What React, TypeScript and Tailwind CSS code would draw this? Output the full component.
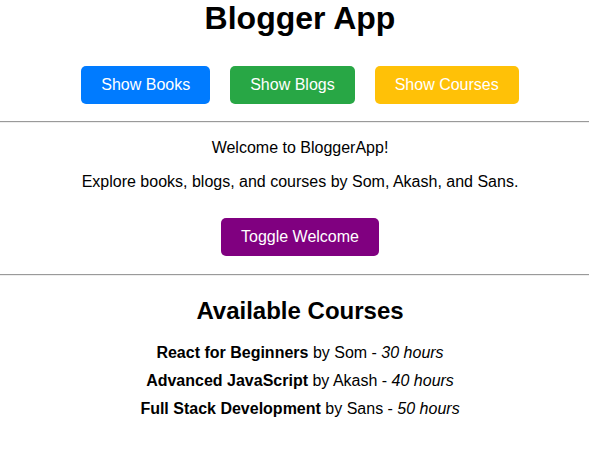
import React from "react";

export default function App() {
  const btn = "px-[20px] py-[10px] text-[16px] leading-[18px] text-white rounded-[5px]";
  const hr = "border-0 border-t border-b border-t-[#9a9a9a] border-b-[#eeeeee] h-[2px]";
  return (
    <div className="w-[589px] h-[457px] overflow-hidden bg-white">
      <div className="w-[600px] text-black text-center" style={{ fontFamily: '"Liberation Sans", Arial, sans-serif' }}>
        <h1 className="mt-0 text-[32px] leading-[37px] font-bold">Blogger App</h1>
        <div className="mt-[29px] flex justify-center gap-[20px]">
          <button className={`${btn} bg-[#007bff]`}>Show Books</button>
          <button className={`${btn} bg-[#28a745]`}>Show Blogs</button>
          <button className={`${btn} bg-[#ffc107]`}>Show Courses</button>
        </div>
        <hr className={`mt-[17px] ${hr}`} />
        <p className="mt-[16px] text-[16px] leading-[18px]">Welcome to BloggerApp!</p>
        <p className="mt-[16px] text-[16px] leading-[18px]">Explore books, blogs, and courses by Som, Akash, and Sans.</p>
        <div className="mt-[27px] flex justify-center">
          <button className={`${btn} bg-[#800080]`}>Toggle Welcome</button>
        </div>
        <hr className={`mt-[18px] ${hr}`} />
        <h2 className="mt-[21px] text-[24px] leading-[28px] font-bold">Available Courses</h2>
        <p className="mt-[19px] text-[16px] leading-[18px]"><b>React for Beginners</b> by Som - <i>30 hours</i></p>
        <p className="mt-[10px] text-[16px] leading-[18px]"><b>Advanced JavaScript</b> by Akash - <i>40 hours</i></p>
        <p className="mt-[10px] text-[16px] leading-[18px]"><b>Full Stack Development</b> by Sans - <i>50 hours</i></p>
      </div>
    </div>
  );
}
